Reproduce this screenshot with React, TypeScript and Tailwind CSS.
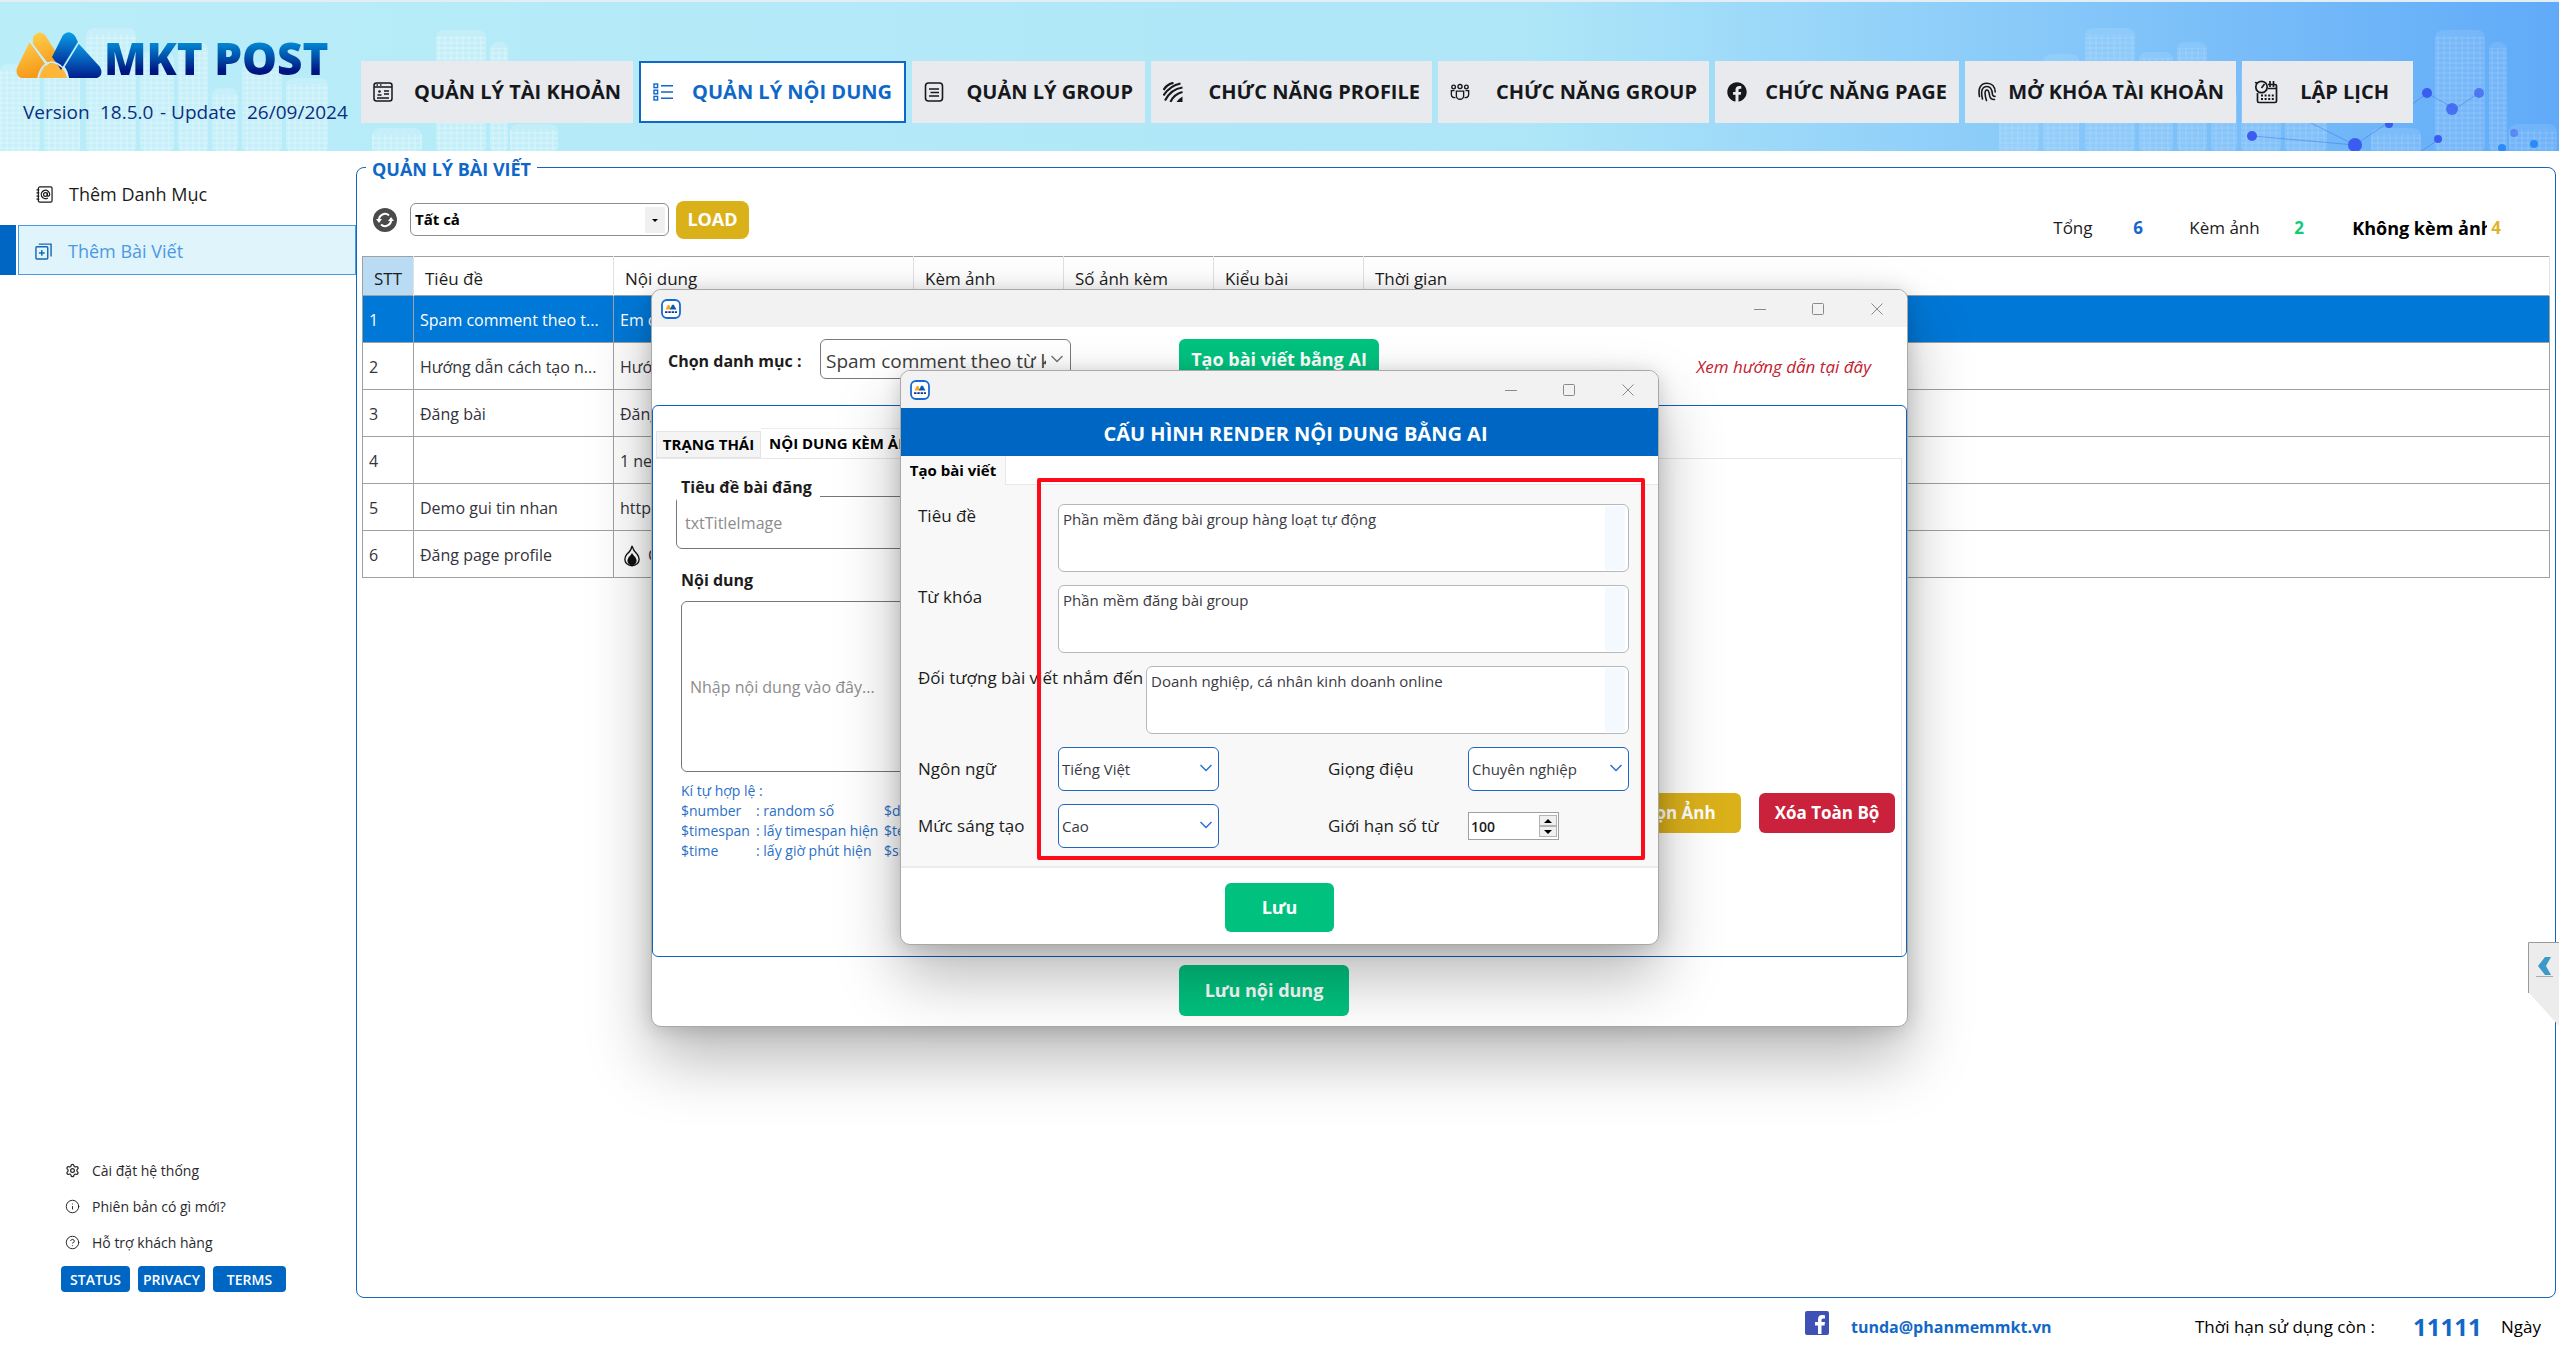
import { ReactNode } from "react";
import { CircleQuestionMark, Info, Settings } from "lucide-react";
import { FaFacebook } from "react-icons/fa";

type IconProps = { className?: string }

const AccountIcon = ({ className }: IconProps) => (
    <svg viewBox="0 0 20 20" className={className} fill="none" stroke="currentColor" strokeWidth="1.5">
        <rect x="1" y="1" width="18" height="18" rx="2.5" />
        <path d="M1 5h18M3.5 3h1.5M7 3h1.5" />
        <circle cx="6.5" cy="9.5" r="1.3" fill="currentColor" stroke="none" />
        <path d="M4.5 13h4M11 9h5M11 12h5M4 16h12" />
    </svg>
);

const ListIcon = ({ className }: IconProps) => (
    <svg viewBox="0 0 20 20" className={className} fill="none" stroke="currentColor" strokeWidth="1.4">
        <rect x="1" y="2" width="3.6" height="3.6" />
        <rect x="1" y="8.2" width="3.6" height="3.6" />
        <rect x="1" y="14.4" width="3.6" height="3.6" />
        <path d="M8 3.8h12M8 10h12M8 16.2h12" />
    </svg>
);

const PageIcon = ({ className }: IconProps) => (
    <svg viewBox="0 0 20 20" className={className} fill="none" stroke="currentColor" strokeWidth="1.6">
        <rect x="1.5" y="1" width="17" height="18" rx="3" />
        <path d="M5 7h10M6.5 10.5h8.5M5 14h10" />
    </svg>
);

const StripesIcon = ({ className }: IconProps) => (
    <svg viewBox="0 0 20 20" className={className} fill="none" stroke="currentColor" strokeWidth="2.2">
        <path d="M0.5 8Q4 2 10.5 0.8M0.5 13.5Q7 3.5 17.5 1.5M2 18.5Q8 7 19.5 5.5M7.5 20Q11 12 19.5 10" />
        <path d="M13.5 20Q15 17 19.5 14.5V20Z" fill="currentColor" stroke="none" />
    </svg>
);

const PeopleIcon = ({ className }: IconProps) => (
    <svg viewBox="0 0 22 20" className={className} fill="none" stroke="currentColor" strokeWidth="1.5">
        <circle cx="4" cy="4.5" r="2" />
        <circle cx="11" cy="4" r="2.3" />
        <circle cx="18" cy="4.5" r="2" />
        <path d="M7 9h8v5a4 4 0 0 1-8 0zM5 8.5H1.5V13a3.3 3.3 0 0 0 4.5 3M17 8.5h3.5V13a3.3 3.3 0 0 1-4.5 3" />
    </svg>
);

const FingerprintIcon = ({ className }: IconProps) => (
    <svg viewBox="0 0 20 20" className={className} fill="none" stroke="currentColor" strokeWidth="1.6" strokeLinecap="round">
        <path d="M2.5 14.5C1 7 3 1.2 10 1.2c5 0 8 3.5 8.2 8.8" />
        <path d="M5.5 17C3.5 9 5 4.5 10 4.5c4 0 5.2 4 5.5 8 .2 1.5 1.5 2 2.5 1.8" />
        <path d="M9.5 18.5C8 14 7 8 10 8c2.5 0 2 4.5 3 7 .8 2 2.5 2.7 4.5 2.5" />
    </svg>
);

const ScheduleIcon = ({ className }: IconProps) => (
    <svg viewBox="0 0 24 24" className={className} fill="none" stroke="currentColor" strokeWidth="1.7">
        <path d="M3.5 13v8q0 1.5 1.5 1.5h16q1.5 0 1.5-1.5V6q0-1.5-1.5-1.5h-7M14 8.5h8.5" />
        <path d="M16 1v6M19.5 1v6" />
        <circle cx="7.5" cy="7" r="5.7" />
        <path d="M7.5 8l3-4M1 2.5l2 .5" />
        <path d="M7 15.5h13M7 19h13" strokeWidth="2" strokeDasharray="2 1.6" />
    </svg>
);

const ContactIcon = ({ className }: IconProps) => (
    <svg viewBox="0 0 18 18" className={className} fill="none" stroke="currentColor" strokeWidth="1.3">
        <rect x="2.5" y="1" width="14.5" height="16" rx="1.5" />
        <path d="M0.5 4h3M0.5 7.3h3M0.5 10.7h3M0.5 14h3" />
        <circle cx="10" cy="9" r="2" />
        <path d="M12 7v2.8c0 1.6 2.5 1.2 2.5-.8a4.5 4.5 0 1 0-2 3.7" />
    </svg>
);

const AddCopyIcon = ({ className }: IconProps) => (
    <svg viewBox="0 0 18 18" className={className} fill="none" stroke="currentColor" strokeWidth="1.5">
        <rect x="1" y="4" width="12.5" height="13" rx="1" />
        <path d="M4 1.2h13v13M7.2 7.5v6M4.2 10.5h6" />
    </svg>
);

const Chevron = ({ className }: IconProps) => (
    <svg viewBox="0 0 12 8" className={className} fill="none" stroke="currentColor" strokeWidth="1.5">
        <path d="M0.5 1L6 6.5L11.5 1" />
    </svg>
);

const LogoMark = ({ className }: IconProps) => (
    <svg viewBox="0 0 86 46" className={className}>
        <defs>
            <linearGradient id="gold" x1="0" y1="0" x2="0.3" y2="1">
                <stop offset="0" stopColor="#ffd04d" />
                <stop offset="1" stopColor="#f79a1c" />
            </linearGradient>
            <linearGradient id="navy" x1="0" y1="0" x2="0" y2="1">
                <stop offset="0" stopColor="#0aa0e8" />
                <stop offset="1" stopColor="#001c8c" />
            </linearGradient>
        </defs>
        <path d="M17 5Q23-3 29 3L45 28L43 38L31 30L17 12Z" fill="url(#gold)" />
        <path d="M14 9L30 33Q24 38 22 46H5Q-1 43 1 36Z" fill="url(#gold)" />
        <path d="M23 46Q27 32 36 31Q47 32 52 46Z" fill="#fdb63a" />
        <path d="M47 3Q53-3 59 4L62 10L45 38Q41 31 36 25Z" fill="url(#navy)" />
        <path d="M63 12L84 35Q88 43 81 46H53Q52 38 47 33L61 10Z" fill="url(#navy)" />
        <path d="M13 8L31 33M63 10L47 36M22 46Q25 31 36 30Q48 32 52 46" stroke="#c9f0fa" strokeWidth="1.5" fill="none" />
    </svg>
);

const AppIcon = () => (
    <svg viewBox="0 0 20 20" className="w-5 h-5">
        <rect x="1" y="1" width="18" height="18" rx="5" fill="#fff" stroke="#1769d2" strokeWidth="1.8" />
        <path d="M4.5 10.5L6.5 6.5q1-1.5 2 0L10.5 10.5z" fill="#f6a623" />
        <path d="M9 10L11 6.3q1-1.5 2 0l2.5 4.200H9.5z" fill="#0a58b8" />
        <path d="M4 13.2h12" stroke="#0b3b8f" strokeWidth="1.8" strokeDasharray="2.5 .8" />
    </svg>
);

const towers = [
    [0, 62, 40], [44, 52, 36], [86, 26, 50], [140, 50, 34], [178, 40, 30], [212, 86, 26],
    [242, 60, 40], [286, 76, 42], [372, 126, 50], [436, 28, 50], [490, 40, 18], [510, 122, 48],
];

// City silhouette drawn over both ends of the banner
function Skyline({ className }: IconProps) {
    return (
        <svg viewBox="0 0 560 151" className={className} fill="#fff">
            <defs>
                <pattern id="windows" width="6" height="5" patternUnits="userSpaceOnUse">
                    <path d="M0 1h6M1 0v5" stroke="#fff" strokeWidth="1" strokeOpacity="0.35" />
                </pattern>
            </defs>
            {towers.map(([x, y, w]) => (
                <g key={x}>
                    <rect x={x} y={y} width={w} height={151 - y} rx="8" fillOpacity="0.2" />
                    <rect x={x} y={y + 6} width={w} height={151 - y} fill="url(#windows)" />
                </g>
            ))}
        </svg>
    );
}

function Network() {
    return (
        <svg viewBox="0 0 560 151" className="absolute right-0 top-0 w-[560px] h-[151px]">
            <path d="M253 134L356 143L290 110M356 143L390 120L428 91M428 91L456 107L480 91M440 137L420 151" stroke="#3b78e8" strokeWidth="1" strokeOpacity="0.5" fill="none" />
            <g fill="#3a5cf0">
                <circle cx="253" cy="134" r="5" />
                <circle cx="356" cy="143" r="7" />
                <circle cx="390" cy="122" r="4" />
                <circle cx="428" cy="91" r="5" />
                <circle cx="480" cy="91" r="5" fillOpacity="0.7" />
                <circle cx="453" cy="107" r="6" fillOpacity="0.8" />
                <circle cx="439" cy="137" r="4" />
                <circle cx="515" cy="131" r="4" fillOpacity="0.5" />
                <circle cx="503" cy="146" r="4" fill="#2a8cf5" />
                <circle cx="535" cy="142" r="4" fill="#2a8cf5" />
            </g>
        </svg>
    );
}

const tabs = [
    { label: "QUẢN LÝ TÀI KHOẢN", icon: <AccountIcon className="w-5 h-5" />, width: "w-[272px]" },
    { label: "QUẢN LÝ NỘI DUNG", icon: <ListIcon className="w-5 h-5" />, width: "w-[267px]", active: true },
    { label: "QUẢN LÝ GROUP", icon: <PageIcon className="w-5 h-5" />, width: "w-[233px]" },
    { label: "CHỨC NĂNG PROFILE", icon: <StripesIcon className="w-5 h-5" />, width: "w-[281px]" },
    { label: "CHỨC NĂNG GROUP", icon: <PeopleIcon className="w-5 h-5" />, width: "w-[271px]" },
    { label: "CHỨC NĂNG PAGE", icon: <FaFacebook className="w-5 h-5" />, width: "w-[244px]" },
    { label: "MỞ KHÓA TÀI KHOẢN", icon: <FingerprintIcon className="w-5 h-5" />, width: "w-[271px]" },
    { label: "LẬP LỊCH", icon: <ScheduleIcon className="w-6 h-6" />, width: "w-[171px]", wide: true },
];

function Header() {
    return (
        <header className="relative flex h-[151px] overflow-hidden border-t-2 border-[#e3eef4] bg-linear-to-r from-[#b9edf8] via-[#aee6f8] via-60% to-[#60aaf8]">
            <Skyline className="absolute left-0 top-0 w-[560px] h-[151px]" />
            <Skyline className="absolute right-0 top-0 w-[560px] h-[151px] opacity-50" />
            <Network />
            <div className="relative w-[361px] shrink-0 pt-[30px]">
                <div className="flex items-center h-[46px] pl-4 gap-0.5">
                    <LogoMark className="w-[86px] h-[46px]" />
                    <span className="pt-1.5 font-extrabold text-[44px] leading-[46px] whitespace-nowrap text-transparent bg-clip-text bg-linear-to-b from-[#0a96de] from-20% to-[#001482] to-80%">MKT POST</span>
                </div>
                <div className="flex mt-[22px] pl-[23px] text-[19px] leading-6 font-medium text-[#0b2f7d] whitespace-nowrap">
                    <span className="w-[77px]">Version</span>
                    <span className="w-[60px]">18.5.0</span>
                    <span className="w-[87px]">- Update</span>
                    <span>26/09/2024</span>
                </div>
            </div>
            <nav className="relative flex items-start gap-1.5 pt-[59px]">
                {tabs.map(tab => (
                    <button key={tab.label} className={`flex items-center justify-between h-[62px] pl-3 text-[20px] font-bold whitespace-nowrap ${tab.width} ${tab.wide ? 'pr-6' : 'pr-3'}
                    ${tab.active ? 'bg-white border-2 border-[#0f68c8] text-[#0f68c8]' : 'bg-[#e8eaee] text-[#17181c]'}`}>
                        {tab.icon}
                        <span>{tab.label}</span>
                    </button>
                ))}
            </nav>
        </header>
    );
}

const supportLinks = [
    { label: "Cài đặt hệ thống", icon: <Settings size={15} strokeWidth={2} /> },
    { label: "Phiên bản có gì mới?", icon: <Info size={15} strokeWidth={1.6} /> },
    { label: "Hỗ trợ khách hàng", icon: <CircleQuestionMark size={15} strokeWidth={1.6} /> },
];

function Sidebar() {
    return (
        <aside className="flex flex-col w-[356px] shrink-0 text-[18px]">
            <button className="flex items-center h-[50px] mt-[18px] pl-9 gap-4 text-[#1c1c1c]">
                <ContactIcon className="w-[17px] h-[17px]" />
                Thêm Danh Mục
            </button>
            <div className="flex h-[50px] mt-1.5 gap-0.5">
                <div className="w-4 bg-[#0066c4]" />
                <button className="flex flex-1 items-center pl-4 pt-0.5 gap-4 border border-[#4a9be0] bg-[#e0f4fc] text-[#4a9ae2]">
                    <AddCopyIcon className="w-[17px] h-[17px] text-[#1666b4]" />
                    Thêm Bài Viết
                </button>
            </div>
            <div className="flex flex-col mt-auto pl-[65px] text-[14px] text-[#2a2a2e]">
                {supportLinks.map(link => (
                    <a key={link.label} href="#" className="flex items-center h-9 gap-3">
                        {link.icon}
                        {link.label}
                    </a>
                ))}
            </div>
            <div className="flex mt-1.5 mb-1.5 pl-[61px] gap-2 text-[14px] text-white font-semibold">
                <button className="w-[69px] h-[26px] rounded bg-[#0066c4]">STATUS</button>
                <button className="w-[67px] h-[26px] rounded bg-[#0066c4]">PRIVACY</button>
                <button className="w-[73px] h-[26px] rounded bg-[#0066c4]">TERMS</button>
            </div>
        </aside>
    );
}

const FlameIcon = () => (
    <svg viewBox="0 0 16 22" className="inline w-4 h-[22px] mr-2 ml-1">
        <path d="M8 1Q9.5 6 13 9Q17 14 13.5 18.5Q8 23 2.5 18.5Q-1 14 3 9Q7 6 8 1Z" fill="none" stroke="#111" strokeWidth="1.3" />
        <path d="M8 8Q9 10 11.5 12.5Q14 17 10.5 19.5Q8 21 5.5 19.5Q2 17 4.5 12.5Q7 10 8 8Z" fill="#111" />
    </svg>
);

const posts = [
    { title: "Spam comment theo t...", content: "Em c" },
    { title: "Hướng dẫn cách tạo n...", content: "Hướ" },
    { title: "Đăng bài", content: "Đăng" },
    { title: "", content: "1 new" },
    { title: "Demo gui tin nhan", content: "http" },
    { title: "Đăng page profile", content: "C", flame: true },
];

function PostTable() {
    return (
        <table className="w-full table-fixed border-collapse border border-[#a0a0a0] text-left">
            <colgroup>
                <col className="w-[51px]" />
                <col className="w-[200px]" />
                <col className="w-[300px]" />
                <col className="w-[150px]" />
                <col className="w-[150px]" />
                <col className="w-[150px]" />
                <col />
            </colgroup>
            <thead>
                <tr className="h-[39px] text-[17px] leading-6 text-[#1c1c1c] [&>th]:font-normal [&>th]:border-r [&>th]:border-[#e2e2e2] [&>th]:pl-[11px] [&>th]:pt-1.5">
                    <th className="bg-[#b9dbf3]">STT</th>
                    <th>Tiêu đề</th>
                    <th>Nội dung</th>
                    <th>Kèm ảnh</th>
                    <th>Số ảnh kèm</th>
                    <th>Kiểu bài</th>
                    <th>Thời gian</th>
                </tr>
            </thead>
            <tbody>
                {posts.map((post, i) => (
                    <tr key={i} className={`h-[47px] text-[16px] whitespace-nowrap [&>td]:border-y [&>td]:border-[#a0a0a0] [&>td]:pl-1.5 [&>td]:pt-0.5 ${i === 0 ? 'bg-[#0078d7] text-white' : 'text-[#33333b]'}`}>
                        <td className="border-r">{i + 1}</td>
                        <td className="border-r">{post.title}</td>
                        <td className="overflow-hidden">{post.flame && <FlameIcon />}{post.content}</td>
                        <td /><td /><td /><td />
                    </tr>
                ))}
            </tbody>
        </table>
    );
}

function PostManager() {
    return (
        <fieldset className="flex-1 min-w-0 mt-0.5 mr-[3px] px-[5px] border border-[#1466b8] rounded-lg">
            <legend className="ml-1 px-1.5 h-7 pt-0.5 leading-7 text-[18px] font-bold text-[#0f68c8]">QUẢN LÝ BÀI VIẾT</legend>
            <div className="flex items-center h-[75px] pl-[11px] pt-0.5">
                <svg viewBox="0 0 24 24" className="w-6 h-6 mr-[13px]" fill="none" stroke="#fff" strokeWidth="2">
                    <circle cx="12" cy="12" r="12" fill="#4b4b4b" stroke="none" />
                    <path d="M6 12.5a6 6 0 0 1 10-5M18 11.5a6 6 0 0 1-10 5" />
                    <path d="M3 11h6l-3 4zM15 13h6l-3-4z" fill="#fff" stroke="none" />
                </svg>
                <div className="relative">
                    <select aria-label="Danh mục" className="block appearance-none w-[259px] h-[33px] pl-1 border border-[#8c8c8c] rounded-md bg-white text-[15px] font-bold text-black">
                        <option>Tất cả</option>
                    </select>
                    <div className="absolute right-1 top-1 flex items-center justify-center w-5 h-[26px] bg-[#f0f0f0] pointer-events-none">
                        <div className="border-x-3 border-t-3 border-x-transparent border-t-black" />
                    </div>
                </div>
                <button className="w-[73px] h-[38px] ml-[7px] rounded-lg bg-[#dbb11a] text-[18px] font-bold text-white">LOAD</button>
                <div className="flex ml-auto mr-[49px] pt-4 text-[17px] leading-6 whitespace-nowrap text-[#1c1c1c]">
                    <span className="w-20">Tổng</span>
                    <span className="w-14 font-bold text-[#1567c8]">6</span>
                    <span className="w-[105px]">Kèm ảnh</span>
                    <span className="w-[58px] font-bold text-[#12c97c]">2</span>
                    <span className="w-[135px] mr-1 overflow-hidden text-[18px] font-bold text-black">Không kèm ảnh</span>
                    <span className="font-bold text-[#e0b22c]">4</span>
                </div>
            </div>
            <PostTable />
        </fieldset>
    );
}

function Footer() {
    return (
        <footer className="flex items-center h-[51px] pr-[18px] pt-1.5 text-[17px] whitespace-nowrap text-black">
            <svg viewBox="0 0 24 24" className="w-6 h-6 ml-auto mr-[22px] mb-2">
                <rect width="24" height="24" rx="2" fill="#3f51b5" />
                <path d="M16.5 23v-8.5h3l.5-3.5h-3.5V9q0-1.6 1.7-1.6H20V4.2q-1-.2-2.7-.2-4.3 0-4.3 4.4V11h-3v3.500h3V23z" fill="#fff" />
            </svg>
            <a href="mailto:tunda@phanmemmkt.vn" className="w-[344px] text-[16px] font-bold text-[#1268c6]">tunda@phanmemmkt.vn</a>
            <span className="w-[218px]">Thời hạn sử dụng còn :</span>
            <span className="w-[88px] text-[24px] font-bold text-[#1268c6]">11111</span>
            <span>Ngày</span>
        </footer>
    );
}

type WindowProps = {
    className: string
    children: ReactNode
}

function DesktopWindow({ className, children }: WindowProps) {
    return (
        <section className={`absolute flex flex-col overflow-hidden border border-[#a8a8a8] rounded-[10px] bg-white shadow-[0_32px_64px_rgba(0,0,0,0.28),0_2px_20px_rgba(0,0,0,0.16)] ${className}`}>
            <div className="flex items-center h-[37px] shrink-0 pl-[9px] pr-6 bg-[#f2f2f2] text-[#8a8a8a]">
                <AppIcon />
                <button aria-label="Thu nhỏ" className="ml-auto">
                    <svg viewBox="0 0 12 12" className="w-3 h-3" stroke="currentColor"><path d="M0 6.5h12" /></svg>
                </button>
                <button aria-label="Phóng to" className="ml-[46px]">
                    <svg viewBox="0 0 12 12" className="w-3 h-3" stroke="currentColor" fill="none"><rect x="0.5" y="0.5" width="11" height="11" rx="1" /></svg>
                </button>
                <button aria-label="Đóng" className="ml-[47px]">
                    <svg viewBox="0 0 12 12" className="w-3 h-3" stroke="currentColor"><path d="M0.5 0.5l11 11M11.5 0.5l-11 11" /></svg>
                </button>
            </div>
            {children}
        </section>
    );
}

const hints = [
    ["$number", ": random số", "$date"],
    ["$timespan", ": lấy timespan hiện", "$text"],
    ["$time", ": lấy giờ phút hiện", "$smile"],
];

function PostWindow() {
    return (
        <DesktopWindow className="left-[651px] top-[289px] w-[1257px]">
            <div className="flex items-start h-[78px] pl-4 pr-9 pt-3">
                <label htmlFor="category" className="w-[152px] leading-[44px] text-[16px] font-bold text-[#1c1c1c]">Chọn danh mục :</label>
                <div className="relative">
                    <select id="category" className="block appearance-none w-[251px] h-10 pt-1 pl-[5px] pr-6 border border-[#7a7a7a] rounded-md bg-white text-[19px] text-[#3c3c3c]">
                        <option>Spam comment theo từ khóa</option>
                    </select>
                    <Chevron className="absolute right-2 top-4 w-3 h-2 text-[#777] pointer-events-none" />
                </div>
                <button className="w-[200px] h-10 ml-[108px] rounded-md bg-[#00c27e] text-[18px] font-bold text-white">Tạo bài viết bằng AI</button>
                <a href="#" className="ml-auto pt-4 leading-6 text-[17px] italic text-[#c4202f]">Xem hướng dẫn tại đây</a>
            </div>
            <div className="h-[552px] pl-[3px] pr-1 pt-[22px] border border-[#0c62c0] rounded-md">
                <div className="flex items-end h-[30px] text-[15px] font-bold text-black">
                    <button className="w-[105px] h-[27px] border border-[#e4e4e4] bg-[#f4f4f4]">TRẠNG THÁI</button>
                    <button className="h-[30px] px-2 border-t border-[#ececec]">NỘI DUNG KÈM ẢNH</button>
                </div>
                <div className="flex items-end h-[497px] pl-5 border-t border-r border-[#e6e6e6]">
                    <div className="flex flex-col items-start h-full w-[620px] pt-4">
                        <label htmlFor="post-title" className="relative z-10 h-[26px] ml-px px-1 pr-2 leading-6 bg-white text-[16px] font-bold text-[#1c1c1c]">Tiêu đề bài đăng</label>
                        <input id="post-title" placeholder="txtTitleImage" className="w-[600px] h-[53px] -mt-[5px] px-2 border border-[#777] rounded-md text-[16px] placeholder:text-[#8c8c8c]" />
                        <label htmlFor="post-body" className="h-[26px] mt-[18px] ml-[5px] leading-[26px] text-[16px] font-bold text-[#1c1c1c]">Nội dung</label>
                        <textarea id="post-body" placeholder="Nhập nội dung vào đây..." className="w-[595px] h-[171px] mt-2 ml-[5px] px-2 pt-[73px] border border-[#777] rounded-md resize-none text-[16px] leading-6 placeholder:text-[#8c8c8c]" />
                        <div className="mt-[9px] ml-[5px] text-[14px] leading-5 whitespace-nowrap text-[#2a70c8]">
                            <p>Kí tự hợp lệ :</p>
                            {hints.map(([key, text, other]) => (
                                <div key={key} className="flex">
                                    <span className="w-[75px]">{key}</span>
                                    <span className="w-32">{text}</span>
                                    <span>{other}</span>
                                </div>
                            ))}
                        </div>
                    </div>
                    <div className="flex ml-auto mr-1.5 mb-[122px] gap-[18px] text-[17px] font-bold text-white">
                        <button className="w-[133px] h-10 rounded-md bg-[#dbb11a]">Chọn Ảnh</button>
                        <button className="w-[136px] h-10 rounded-md bg-[#ca223c]">Xóa Toàn Bộ</button>
                    </div>
                </div>
            </div>
            <div className="h-[69px] pt-2 pl-[527px]">
                <button className="w-[170px] h-[51px] rounded-md bg-[#00c27e] text-[18px] font-bold text-white">Lưu nội dung</button>
            </div>
        </DesktopWindow>
    );
}

type AreaProps = {
    id: string
    label: string
    value: string
    labelWidth: string
}

function AreaRow({ id, label, value, labelWidth }: AreaProps) {
    return (
        <div className="flex h-[68px]">
            <label htmlFor={id} className={`shrink-0 leading-6 whitespace-nowrap text-[17px] text-[#1c1c1c] ${labelWidth}`}>{label}</label>
            <div className="relative flex flex-1">
                <textarea id={id} defaultValue={value} className="flex-1 pl-1 pt-1 border border-[#b4b8be] rounded-md bg-white resize-none text-[15px] leading-5 text-[#3a3a42]" />
                <div className="absolute right-1 inset-y-0.5 w-5 bg-[#f3f9fe] pointer-events-none" />
            </div>
        </div>
    );
}

type PickProps = {
    id: string
    label: string
    value: string
}

function PickField({ id, label, value }: PickProps) {
    return (
        <div className="flex items-center h-11">
            <label htmlFor={id} className="w-[140px] whitespace-nowrap text-[17px] text-[#1c1c1c]">{label}</label>
            <div className="relative">
                <select id={id} className="block appearance-none w-[161px] h-11 pl-[3px] border border-[#1e66c0] rounded-md bg-white text-[15px] text-[#3a3a42]">
                    <option>{value}</option>
                </select>
                <Chevron className="absolute right-[7px] top-[17px] w-3 h-2 text-[#2a70d0] pointer-events-none" />
            </div>
        </div>
    );
}

function AiWindow() {
    return (
        <DesktopWindow className="left-[900px] top-[370px] w-[759px]">
            <h2 className="h-12 pl-8 leading-[52px] text-center text-[20px] font-bold text-white bg-[#0066c4]">CẤU HÌNH RENDER NỘI DUNG BẰNG AI</h2>
            <div className="flex h-[29px]">
                <button className="w-[105px] border-r border-[#e8e8e8] bg-[#f8f8f8] text-[15px] font-bold text-black">Tạo bài viết</button>
                <div className="flex-1 border-b border-[#e8e8e8]" />
            </div>
            <form className="flex flex-col h-[383px] pl-[17px] pr-[29px] pt-[19px] gap-[13px] border-b-2 border-[#ececec] bg-[#f8f8f8]">
                <AreaRow id="topic" label="Tiêu đề" value="Phần mềm đăng bài group hàng loạt tự động" labelWidth="w-[140px]" />
                <AreaRow id="keyword" label="Từ khóa" value="Phần mềm đăng bài group" labelWidth="w-[140px]" />
                <AreaRow id="audience" label="Đối tượng bài viết nhắm đến" value="Doanh nghiệp, cá nhân kinh doanh online" labelWidth="w-[228px]" />
                <div className="flex justify-between">
                    <PickField id="language" label="Ngôn ngữ" value="Tiếng Việt" />
                    <PickField id="tone" label="Giọng điệu" value="Chuyên nghiệp" />
                </div>
                <div className="flex justify-between">
                    <PickField id="creativity" label="Mức sáng tạo" value="Cao" />
                    <div className="flex items-center w-[301px]">
                        <label htmlFor="limit" className="w-[140px] text-[17px] text-[#1c1c1c]">Giới hạn số từ</label>
                        <div className="flex w-[91px] h-7 border border-[#a0a0a0] bg-white">
                            <input id="limit" defaultValue="100" className="w-[70px] pl-0.5 text-[14px] font-semibold text-[#1c1c1c]" />
                            <div className="flex flex-col w-[18px] my-0.5">
                                <button type="button" aria-label="Tăng" className="flex flex-1 items-center justify-center border border-[#b4b4b4] bg-[#f0f0f0]">
                                    <span className="border-x-4 border-b-4 border-x-transparent border-b-black" />
                                </button>
                                <button type="button" aria-label="Giảm" className="flex flex-1 items-center justify-center border border-[#b4b4b4] bg-[#f0f0f0]">
                                    <span className="border-x-4 border-t-4 border-x-transparent border-t-black" />
                                </button>
                            </div>
                        </div>
                    </div>
                </div>
            </form>
            <div className="h-[76px] pt-[15px] text-center">
                <button className="w-[109px] h-[49px] rounded-md bg-[#00c27e] text-[18px] font-bold text-white">Lưu</button>
            </div>
            <div className="absolute left-[136px] top-[107px] w-[608px] h-[382px] border-4 border-[#ff0a18] rounded-xs pointer-events-none" />
        </DesktopWindow>
    );
}

function DrawerHandle() {
    return (
        <button aria-label="Mở bảng bên" className="absolute right-0 top-[942px]">
            <svg viewBox="0 0 31 84" className="w-[31px] h-[84px]">
                <path d="M0.5 51V0.5H31" fill="none" stroke="#999" />
                <path d="M1 1H31V84L1 51Z" fill="#ececec" />
                <path d="M17 15h6l-5 9 5 9h-6l-7-9z" fill="#3b9bc8" />
                <path d="M8 34.5h17" stroke="#aaa" />
            </svg>
        </button>
    );
}

export default function App() {
    return (
        <div className="relative flex flex-col min-h-screen overflow-hidden bg-white font-['Open_Sans','Noto_Sans',sans-serif]">
            <Header />
            <div className="flex flex-1">
                <Sidebar />
                <PostManager />
            </div>
            <Footer />
            <PostWindow />
            <AiWindow />
            <DrawerHandle />
        </div>
    );
}
